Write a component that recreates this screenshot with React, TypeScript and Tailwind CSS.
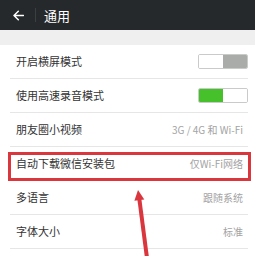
import { useState } from 'react';

type Row =
  | { label: string; kind: 'toggle'; on: boolean }
  | { label: string; kind: 'value'; value: string };

const rows: Row[] = [
  { label: '开启横屏模式', kind: 'toggle', on: false },
  { label: '使用高速录音模式', kind: 'toggle', on: true },
  { label: '朋友圈小视频', kind: 'value', value: '3G / 4G 和 Wi-Fi' },
  { label: '自动下载微信安装包', kind: 'value', value: '仅Wi-Fi网络' },
  { label: '多语言', kind: 'value', value: '跟随系统' },
  { label: '字体大小', kind: 'value', value: '标准' },
];

function Toggle({ on }: { on: boolean }) {
  return (
    <div className="flex h-[15px] w-[50px] overflow-hidden rounded-[2px] border border-[#c9cbc9]">
      <div className={on ? 'flex-1 bg-[#47c12b]' : 'flex-1 bg-white'} />
      <div className={on ? 'flex-1 bg-white' : 'flex-1 bg-[#a9aca9]'} />
    </div>
  );
}

export default function App() {
  const [items] = useState(rows);

  return (
    <div className="relative h-[256px] w-[255px] overflow-hidden bg-white font-['Noto_Sans_CJK_SC','Noto_Sans',sans-serif]">
      <header className="flex h-[30px] items-center bg-[#26292b]">
        <svg className="ml-[13px] h-[11px] w-[11px]" viewBox="0 0 11 11" fill="none">
          <path
            d="M10.5 5.5H1.2M5.3 1.2L1 5.5l4.3 4.3"
            stroke="#ffffff"
            strokeWidth="1.5"
            strokeLinecap="round"
            strokeLinejoin="round"
          />
        </svg>
        <div className="ml-[11px] h-[14px] w-px bg-[#3b3f41]" />
        <h1 className="ml-[8px] text-[13px] leading-none text-white">通用</h1>
      </header>

      <div className="h-[15px] bg-[#efeff0]" />

      <ul>
        {items.map((row) => (
          <li
            key={row.label}
            className="ml-[10px] mr-[7px] flex h-[34px] items-center justify-between border-b border-[#e6e6e6] pl-[6px]"
          >
            <span className="text-[11px] leading-none text-[#343434]">{row.label}</span>
            {row.kind === 'toggle' ? (
              <Toggle on={row.on} />
            ) : (
              <span className="pr-[5px] text-[10px] leading-none text-[#a3a3a3]">{row.value}</span>
            )}
          </li>
        ))}
      </ul>

      {/* annotation */}
      <div className="absolute left-[8px] top-[152px] h-[29px] w-[243px] border-[3px] border-[#d9363e]" />
      <svg className="absolute left-[130px] top-[186px] h-[72px] w-[24px]" viewBox="0 0 24 72" fill="none">
        <path d="M9.4 13.5L17 72" stroke="#d9363e" strokeWidth="4" />
        <polygon points="8,4 14.3,13.4 4.4,14.8" fill="#d9363e" />
      </svg>
    </div>
  );
}
